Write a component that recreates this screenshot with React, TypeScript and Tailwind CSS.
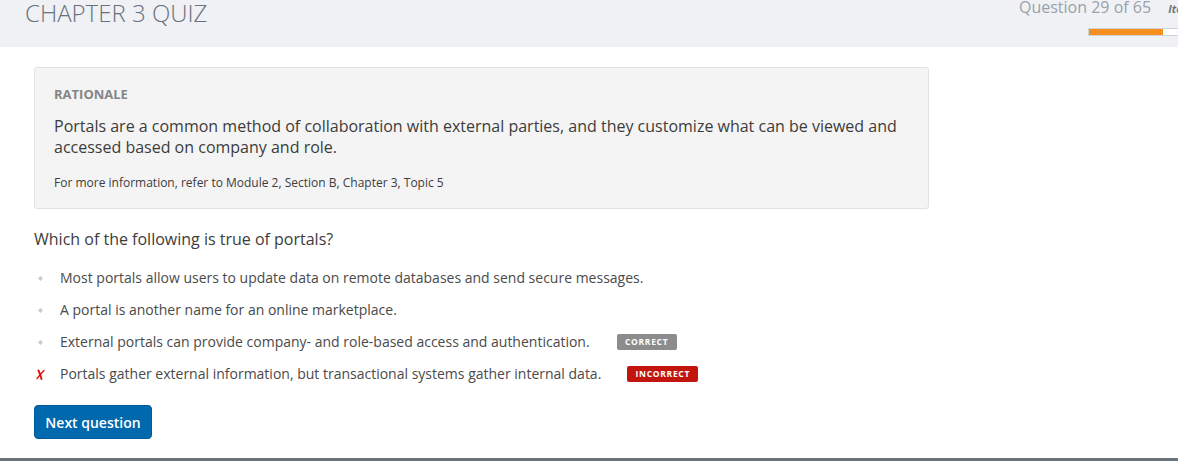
const options = [
  { text: 'Most portals allow users to update data on remote databases and send secure messages.' },
  { text: 'A portal is another name for an online marketplace.' },
  { text: 'External portals can provide company- and role-based access and authentication.', badge: 'correct' },
  { text: 'Portals gather external information, but transactional systems gather internal data.', badge: 'incorrect', picked: true },
];

function Diamond() {
  return (
    <svg width="5" height="5" viewBox="0 0 6 6" className="block">
      <path d="M3 0 L6 3 L3 6 L0 3 Z" fill="#cbcbcb" />
    </svg>
  );
}

function RedX() {
  return (
    <svg width="9" height="11" viewBox="0 0 9 11" className="block">
      <path d="M2.5 1.5 C3.5 3.5 4.5 6.5 5.5 10" stroke="#e3160b" strokeWidth="2" fill="none" strokeLinecap="round" />
      <path d="M8 1.5 C6 3.5 3.5 6.5 1 9.5" stroke="#e3160b" strokeWidth="1.4" fill="none" strokeLinecap="round" />
    </svg>
  );
}

export default function App() {
  return (
    <div className="flex h-[461px] w-[1178px] flex-col overflow-hidden bg-white font-['Open_Sans',sans-serif]">
      <header className="flex h-[47px] shrink-0 overflow-hidden bg-[#eff1f5]">
        <h1 className="-mt-px pl-[25px] text-[24px] font-light leading-[28px] text-[#68717c]">CHAPTER 3 QUIZ</h1>
        <div className="ml-auto w-[159px] shrink-0 overflow-hidden whitespace-nowrap">
          <div className="-mt-[3px] flex items-baseline leading-[20px]">
            <span className="text-[16px] text-[#9aa1a9]">Question 29 of 65</span>
            <span className="ml-[17px] text-[11px] font-bold italic text-[#6d747c]">Item</span>
          </div>
          <div className="ml-[69px] mt-[9px] h-[8px] w-[120px] border border-[#cfd2d6] bg-white">
            <div className="h-full w-[74px] bg-[#f39020]" />
          </div>
        </div>
      </header>

      <main className="px-[34px] pt-[20px]">
        <section className="w-[895px] rounded-[3px] border border-[#e1e1e1] bg-[#f4f4f4] px-[19px] pb-[17px] pt-[17px]">
          <h2 className="text-[13px] font-bold leading-[18px] text-[#858585]">RATIONALE</h2>
          <p className="mt-[13px] text-[16px] leading-[21px] text-[#3c3c3c]">
            Portals are a common method of collaboration with external parties, and they customize what can be viewed and accessed based on company and role.
          </p>
          <p className="mt-[17px] text-[12px] leading-[16px] text-[#3c3c3c]">
            For more information, refer to Module 2, Section B, Chapter 3, Topic 5
          </p>
        </section>

        <p className="mt-[20px] text-[16px] leading-[21px] text-[#3c3c3c]">Which of the following is true of portals?</p>

        <ul className="mt-[12px]">
          {options.map((o) => (
            <li key={o.text} className="flex h-[32px] items-center">
              <div className="flex w-[26px] shrink-0 items-center pl-[2px]">
                {o.picked ? <RedX /> : <span className="ml-[2px]"><Diamond /></span>}
              </div>
              <span className="text-[14px] leading-[20px] text-[#4a4a4a]">{o.text}</span>
              {o.badge === 'correct' && (
                <span className="ml-[27px] flex h-[16px] w-[60px] items-center justify-center rounded-[2px] bg-[#8c8c8c] text-[8.5px] font-bold tracking-[0.7px] text-white">
                  CORRECT
                </span>
              )}
              {o.badge === 'incorrect' && (
                <span className="ml-[26px] flex h-[16px] w-[71px] items-center justify-center rounded-[2px] bg-[#c2150d] text-[8.5px] font-bold tracking-[0.7px] text-white">
                  INCORRECT
                </span>
              )}
            </li>
          ))}
        </ul>

        <button className="mt-[15px] h-[34px] w-[118px] rounded-[4px] border border-[#00599a] bg-[#0068ad] text-[14px] font-semibold text-white">
          Next question
        </button>
      </main>

      <div className="mt-auto h-[3px] shrink-0 bg-[#6b737b]" />
    </div>
  );
}
